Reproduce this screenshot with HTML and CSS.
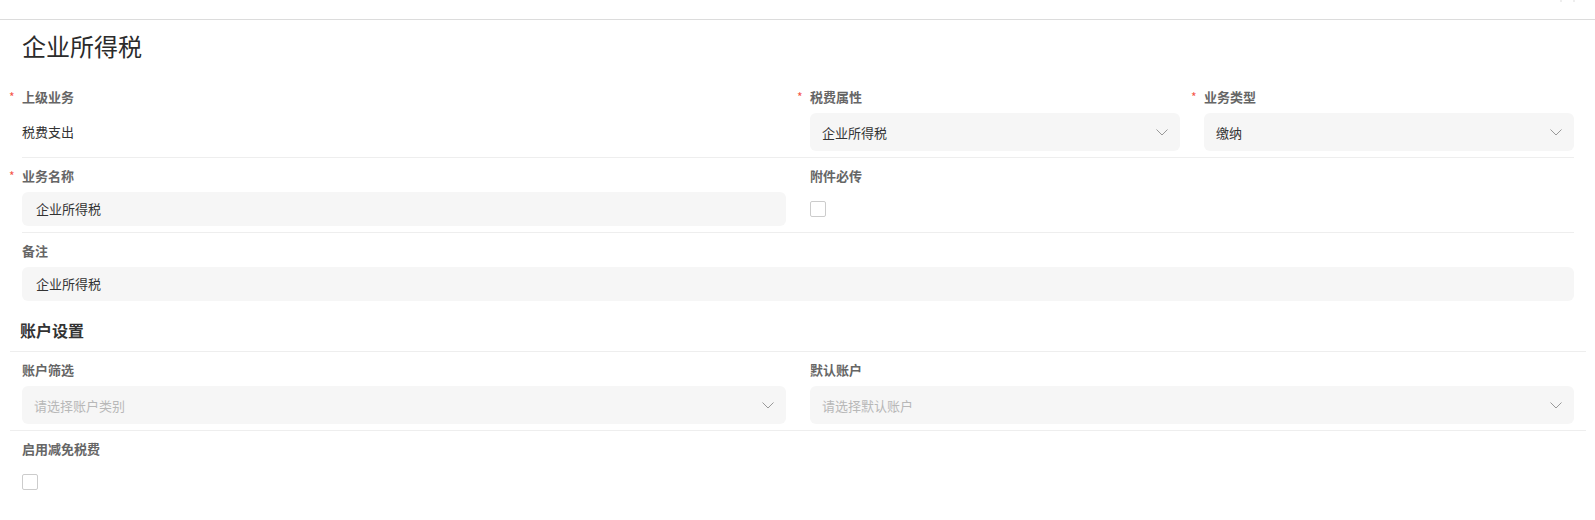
FILE: index.html
```html
<!DOCTYPE html>
<html lang="zh-CN">
<head>
    <meta charset="UTF-8">
    <meta name="viewport" content="width=device-width, initial-scale=1.0">
    <title>企业所得税</title>
    <link rel="stylesheet" href="styles.css">
</head>
<body>
    <div class="topbar">
        <span class="topbar-mark"></span>
    </div>

    <div class="page">
        <h1 class="title">企业所得税</h1>

        <div class="row">
            <div class="field span-2">
                <div class="label"><span class="req">*</span>上级业务</div>
                <div class="value">税费支出</div>
            </div>
            <div class="field">
                <div class="label"><span class="req">*</span>税费属性</div>
                <div class="select">
                    <span>企业所得税</span>
                    <svg class="arrow" width="12" height="7" viewBox="0 0 12 7"><path d="M0.5 0.5 L6 6 L11.5 0.5" fill="none" stroke="#999" stroke-width="1"/></svg>
                </div>
            </div>
            <div class="field">
                <div class="label"><span class="req">*</span>业务类型</div>
                <div class="select">
                    <span>缴纳</span>
                    <svg class="arrow" width="12" height="7" viewBox="0 0 12 7"><path d="M0.5 0.5 L6 6 L11.5 0.5" fill="none" stroke="#999" stroke-width="1"/></svg>
                </div>
            </div>
        </div>

        <div class="row">
            <div class="field span-2">
                <div class="label"><span class="req">*</span>业务名称</div>
                <div class="input">企业所得税</div>
            </div>
            <div class="field">
                <div class="label">附件必传</div>
                <div class="check-wrap"><span class="checkbox"></span></div>
            </div>
        </div>

        <div class="row last">
            <div class="field span-4">
                <div class="label">备注</div>
                <div class="input">企业所得税</div>
            </div>
        </div>

        <div class="section">
            <div class="section-title">账户设置</div>

            <div class="row">
                <div class="field span-2">
                    <div class="label">账户筛选</div>
                    <div class="select placeholder">
                        <span>请选择账户类别</span>
                        <svg class="arrow" width="12" height="7" viewBox="0 0 12 7"><path d="M0.5 0.5 L6 6 L11.5 0.5" fill="none" stroke="#999" stroke-width="1"/></svg>
                    </div>
                </div>
                <div class="field span-2">
                    <div class="label">默认账户</div>
                    <div class="select placeholder">
                        <span>请选择默认账户</span>
                        <svg class="arrow" width="12" height="7" viewBox="0 0 12 7"><path d="M0.5 0.5 L6 6 L11.5 0.5" fill="none" stroke="#999" stroke-width="1"/></svg>
                    </div>
                </div>
            </div>

            <div class="row last">
                <div class="field">
                    <div class="label">启用减免税费</div>
                    <div class="check-wrap"><span class="checkbox"></span></div>
                </div>
            </div>
        </div>
    </div>
</body>
</html>
```

FILE: styles.css
```css
body {
    margin: 0;
    font-family: "Noto Sans CJK SC", "Noto Sans", sans-serif;
    font-size: 13px;
    color: #333;
    background: #fff;
}

.topbar {
    height: 19px;
    border-bottom: 1px solid #dcdcdc;
    position: relative;
}

.topbar-mark {
    position: absolute;
    top: 0;
    left: 1560px;
    width: 15px;
    height: 2px;
    border-left: 2px solid #eee;
    border-right: 2px solid #eee;
    box-sizing: border-box;
}

.page {
    padding: 0 21px 0 22px;
}

.title {
    margin: 10px 0 17px;
    font-size: 24px;
    line-height: 32px;
    font-weight: normal;
    color: #2b2b2b;
}

.row {
    display: grid;
    grid-template-columns: repeat(4, 1fr);
    column-gap: 24px;
    padding: 8px 0 6px;
    border-bottom: 1px solid #eee;
}

    .row.last {
        border-bottom: none;
    }

.span-2 {
    grid-column: span 2;
}

.span-4 {
    grid-column: span 4;
}

.label {
    line-height: 20px;
    margin-bottom: 6px;
    font-weight: bold;
    color: #666;
}

.req {
    display: inline-block;
    width: 13px;
    margin-left: -13px;
    color: #f5564a;
    font-size: 12px;
    font-weight: normal;
    vertical-align: top;
}

.value {
    height: 38px;
    line-height: 38px;
}

.select {
    height: 38px;
    padding: 0 12px;
    background: #f6f6f6;
    border-radius: 6px;
    display: flex;
    align-items: center;
    justify-content: space-between;
}

    .select.placeholder {
        color: #b8b8b8;
    }

.input {
    height: 34px;
    line-height: 34px;
    padding: 0 14px;
    background: #f6f6f6;
    border-radius: 6px;
}

.check-wrap {
    height: 34px;
    display: flex;
    align-items: center;
}

.checkbox {
    width: 16px;
    height: 16px;
    box-sizing: border-box;
    border: 1px solid #ccc;
    border-radius: 2px;
    background: #fff;
}

.section {
    margin: 0 -12px;
}

    .section .row {
        padding-left: 12px;
        padding-right: 12px;
    }

.section-title {
    margin-top: 11px;
    padding: 0 0 9px 10px;
    font-size: 16px;
    line-height: 24px;
    font-weight: bold;
    color: #333;
    border-bottom: 1px solid #eee;
}
```
